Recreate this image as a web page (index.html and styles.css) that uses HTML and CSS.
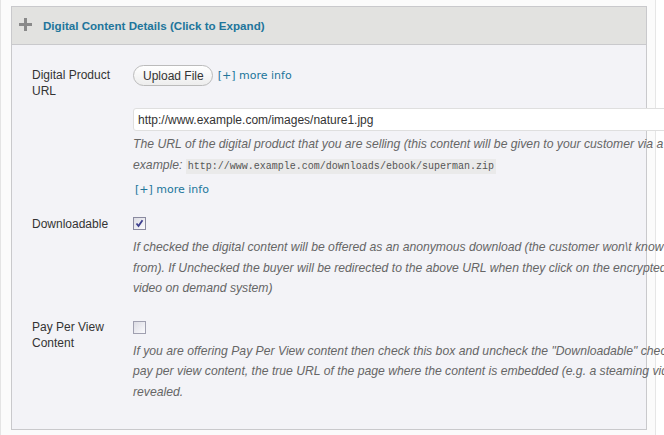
FILE: index.html
```html
<!DOCTYPE html>
<html lang="en">
  <head>
    <meta charset="utf8">
    <meta name="viewport" content="width=device-width, initial-scale=1">
    <title>Digital Content Details</title>
    <link rel="stylesheet" href="styles.css">
  </head>

  <body>
    <div class="page">
      <div class="column">
        <div class="postbox">
          <h3 class="postbox-title">
            <span class="toggle"></span>
            <span>Digital Content Details (Click to Expand)</span>
          </h3>

          <div class="inside">
            <div class="row row-url">
              <div class="label">Digital Product URL</div>
              <div class="field">
                <div class="upload-line">
                  <button type="button" class="button">Upload File</button>
                  <a href="#" class="more-info">[+] more info</a>
                </div>
                <input type="text" class="url-input" value="http://www.example.com/images/nature1.jpg">
                <p class="description">The URL of the digital product that you are selling (this content will be given to your customer via a secure link), for<br>example: <code>http://www.example.com/downloads/ebook/superman.zip</code></p>
                <a href="#" class="more-info more-info-below">[+] more info</a>
              </div>
            </div>

            <div class="row row-download">
              <div class="label">Downloadable</div>
              <div class="field">
                <span class="checkbox checked">
                  <svg width="9" height="9" viewBox="0 0 9 9"><path d="M1.5 4.5 L3.5 7 L7.5 1.2" fill="none" stroke="#3d3f8f" stroke-width="1.8"/></svg>
                </span>
                <p class="description">If checked the digital content will be offered as an anonymous download (the customer won\t know where it came<br>from). If Unchecked the buyer will be redirected to the above URL when they click on the encrypted link (e.g. a<br>video on demand system)</p>
              </div>
            </div>

            <div class="row row-ppv">
              <div class="label">Pay Per View Content</div>
              <div class="field">
                <span class="checkbox"></span>
                <p class="description">If you are offering Pay Per View content then check this box and uncheck the "Downloadable" checkbox. With<br>pay per view content, the true URL of the page where the content is embedded (e.g. a steaming video) is never<br>revealed.</p>
              </div>
            </div>
          </div>
        </div>
      </div>
    </div>
  </body>
</html>
```

FILE: styles.css
```css
html, body {
  margin: 0;
  padding: 0;
  background-color: #fff;
}

body {
  font-family: "Liberation Sans", Arial, sans-serif;
  font-size: 12px;
  color: #333;
}

.page {
  height: 435px;
  overflow: hidden;
}

.column {
  width: 656px;
  height: 100%;
  box-sizing: border-box;
  padding: 6px 0 0 10px;
  background-color: #fbfbfb;
  border-left: 1px solid #e4e4e4;
  border-right: 1px solid #e6e6e6;
}

.postbox {
  width: 636px;
  box-sizing: border-box;
  border: 1px solid #c9c9cc;
  background-color: #f3f3f7;
}

.postbox-title {
  display: flex;
  align-items: center;
  gap: 11px;
  height: 37px;
  margin: 0;
  padding: 0 0 0 7px;
  background-color: #e2e2e0;
  border-bottom: 1px solid #c9c9cc;
  color: #21759b;
  font-size: 11.6px;
  font-weight: bold;
}

.toggle {
  position: relative;
  width: 13px;
  height: 13px;
  margin-top: -2px;
}
.toggle::before,
.toggle::after {
  content: "";
  position: absolute;
  background-color: #8a8a8a;
}
.toggle::before {
  left: 0;
  top: 5px;
  width: 13px;
  height: 3px;
}
.toggle::after {
  left: 5px;
  top: 0;
  width: 3px;
  height: 13px;
}

.inside {
  padding: 20px 0 27px 20px;
}

.row {
  display: flex;
}
.row + .row {
  margin-top: 18px;
}
.row-ppv {
  margin-top: 20px !important;
}

.label {
  flex: none;
  width: 101px;
  line-height: 16px;
}
.row-url .label {
  padding-top: 2px;
  width: 80px;
  margin-right: 21px;
}

.field {
  flex: none;
  width: 900px;
}

.upload-line {
  display: flex;
  align-items: center;
  gap: 5px;
  height: 21px;
}

.button {
  height: 21px;
  padding: 0 8px 0 9px;
  border: 1px solid #bbb;
  border-radius: 11px;
  background: linear-gradient(#fff, #ededed);
  color: #333;
  font-family: "Liberation Sans", Arial, sans-serif;
  font-size: 12px;
}

.more-info {
  color: #21759b;
  text-decoration: none;
  font-family: "DejaVu Sans", Verdana, sans-serif;
  font-size: 11px;
  line-height: 16px;
}

.more-info-below {
  display: block;
  margin: 5px 0 0 2px;
}

.url-input {
  display: block;
  width: 560px;
  height: 23px;
  box-sizing: border-box;
  margin: 22px 0 0;
  padding: 0 4px;
  border: 1px solid #dfdfdf;
  border-radius: 3px;
  background-color: #fff;
  color: #333;
  font-family: "Liberation Sans", Arial, sans-serif;
  font-size: 12px;
}

.description {
  margin: 3px 0 0;
  color: #666;
  font-style: italic;
  font-size: 12.2px;
  line-height: 21px;
}

code {
  padding: 2px 2px;
  background-color: #eaeaea;
  color: #555;
  font-family: "Liberation Mono", Consolas, monospace;
  font-style: normal;
  font-size: 10px;
}

.checkbox {
  display: flex;
  align-items: center;
  justify-content: center;
  width: 13px;
  height: 13px;
  box-sizing: border-box;
  margin: 1px 0 0 0;
  border: 1px solid #8a8aa0;
  background: linear-gradient(135deg, #dcdce4, #fbfbfd);
}

.row-download .description,
.row-ppv .description {
  margin-top: 7px;
  line-height: 20.5px;
}

.row-ppv .checkbox {
  margin-top: 2px;
  border-color: #a0a0b0;
}
```
